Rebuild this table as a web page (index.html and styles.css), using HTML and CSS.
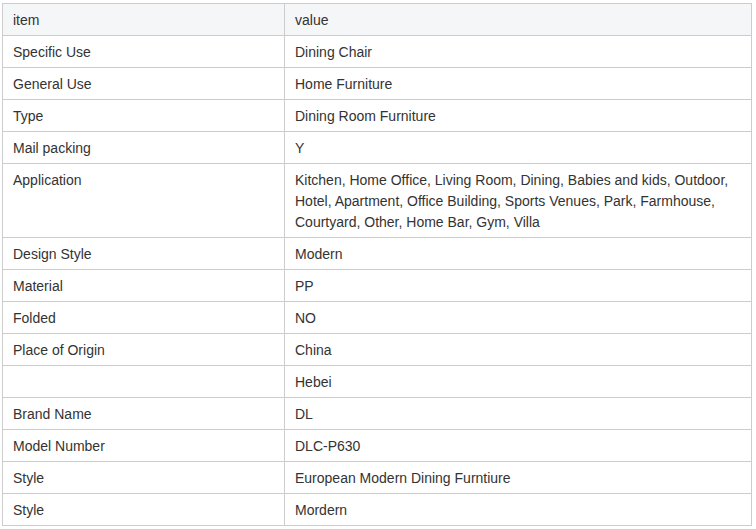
FILE: index.html
```html
<!DOCTYPE html>
<html>
<head>
<meta charset="utf-8">
<link rel="stylesheet" href="styles.css">
</head>
<body>
<table class="spec">
  <colgroup><col class="c1"><col class="c2"></colgroup>
  <thead>
    <tr><th>item</th><th>value</th></tr>
  </thead>
  <tbody>
    <tr><td>Specific Use</td><td>Dining Chair</td></tr>
    <tr><td>General Use</td><td>Home Furniture</td></tr>
    <tr><td>Type</td><td>Dining Room Furniture</td></tr>
    <tr><td>Mail packing</td><td>Y</td></tr>
    <tr><td>Application</td><td>Kitchen, Home Office, Living Room, Dining, Babies and kids, Outdoor, Hotel, Apartment, Office Building, Sports Venues, Park, Farmhouse, Courtyard, Other, Home Bar, Gym, Villa</td></tr>
    <tr><td>Design Style</td><td>Modern</td></tr>
    <tr><td>Material</td><td>PP</td></tr>
    <tr><td>Folded</td><td>NO</td></tr>
    <tr><td>Place of Origin</td><td>China</td></tr>
    <tr><td></td><td>Hebei</td></tr>
    <tr><td>Brand Name</td><td>DL</td></tr>
    <tr><td>Model Number</td><td>DLC-P630</td></tr>
    <tr><td>Style</td><td>European Modern Dining Furntiure</td></tr>
    <tr><td>Style</td><td>Mordern</td></tr>
  </tbody>
</table>
</body>
</html>
```
FILE: styles.css
```css
html, body {
  margin: 0;
  padding: 0;
  background: #ffffff;
}
body {
  padding: 3px 0 0 2px;
  font-family: "Liberation Sans", Arial, sans-serif;
  font-size: 14px;
  color: #333333;
}
.spec {
  border-collapse: collapse;
  width: 750px;
  table-layout: fixed;
}
.c1 { width: 282px; }
.spec th,
.spec td {
  border: 1px solid #cccccc;
  padding: 6px 10px 4px;
  line-height: 21px;
  height: 21px;
  text-align: left;
  vertical-align: top;
  font-weight: normal;
}
.spec thead th {
  background: #f5f6f8;
}
```
